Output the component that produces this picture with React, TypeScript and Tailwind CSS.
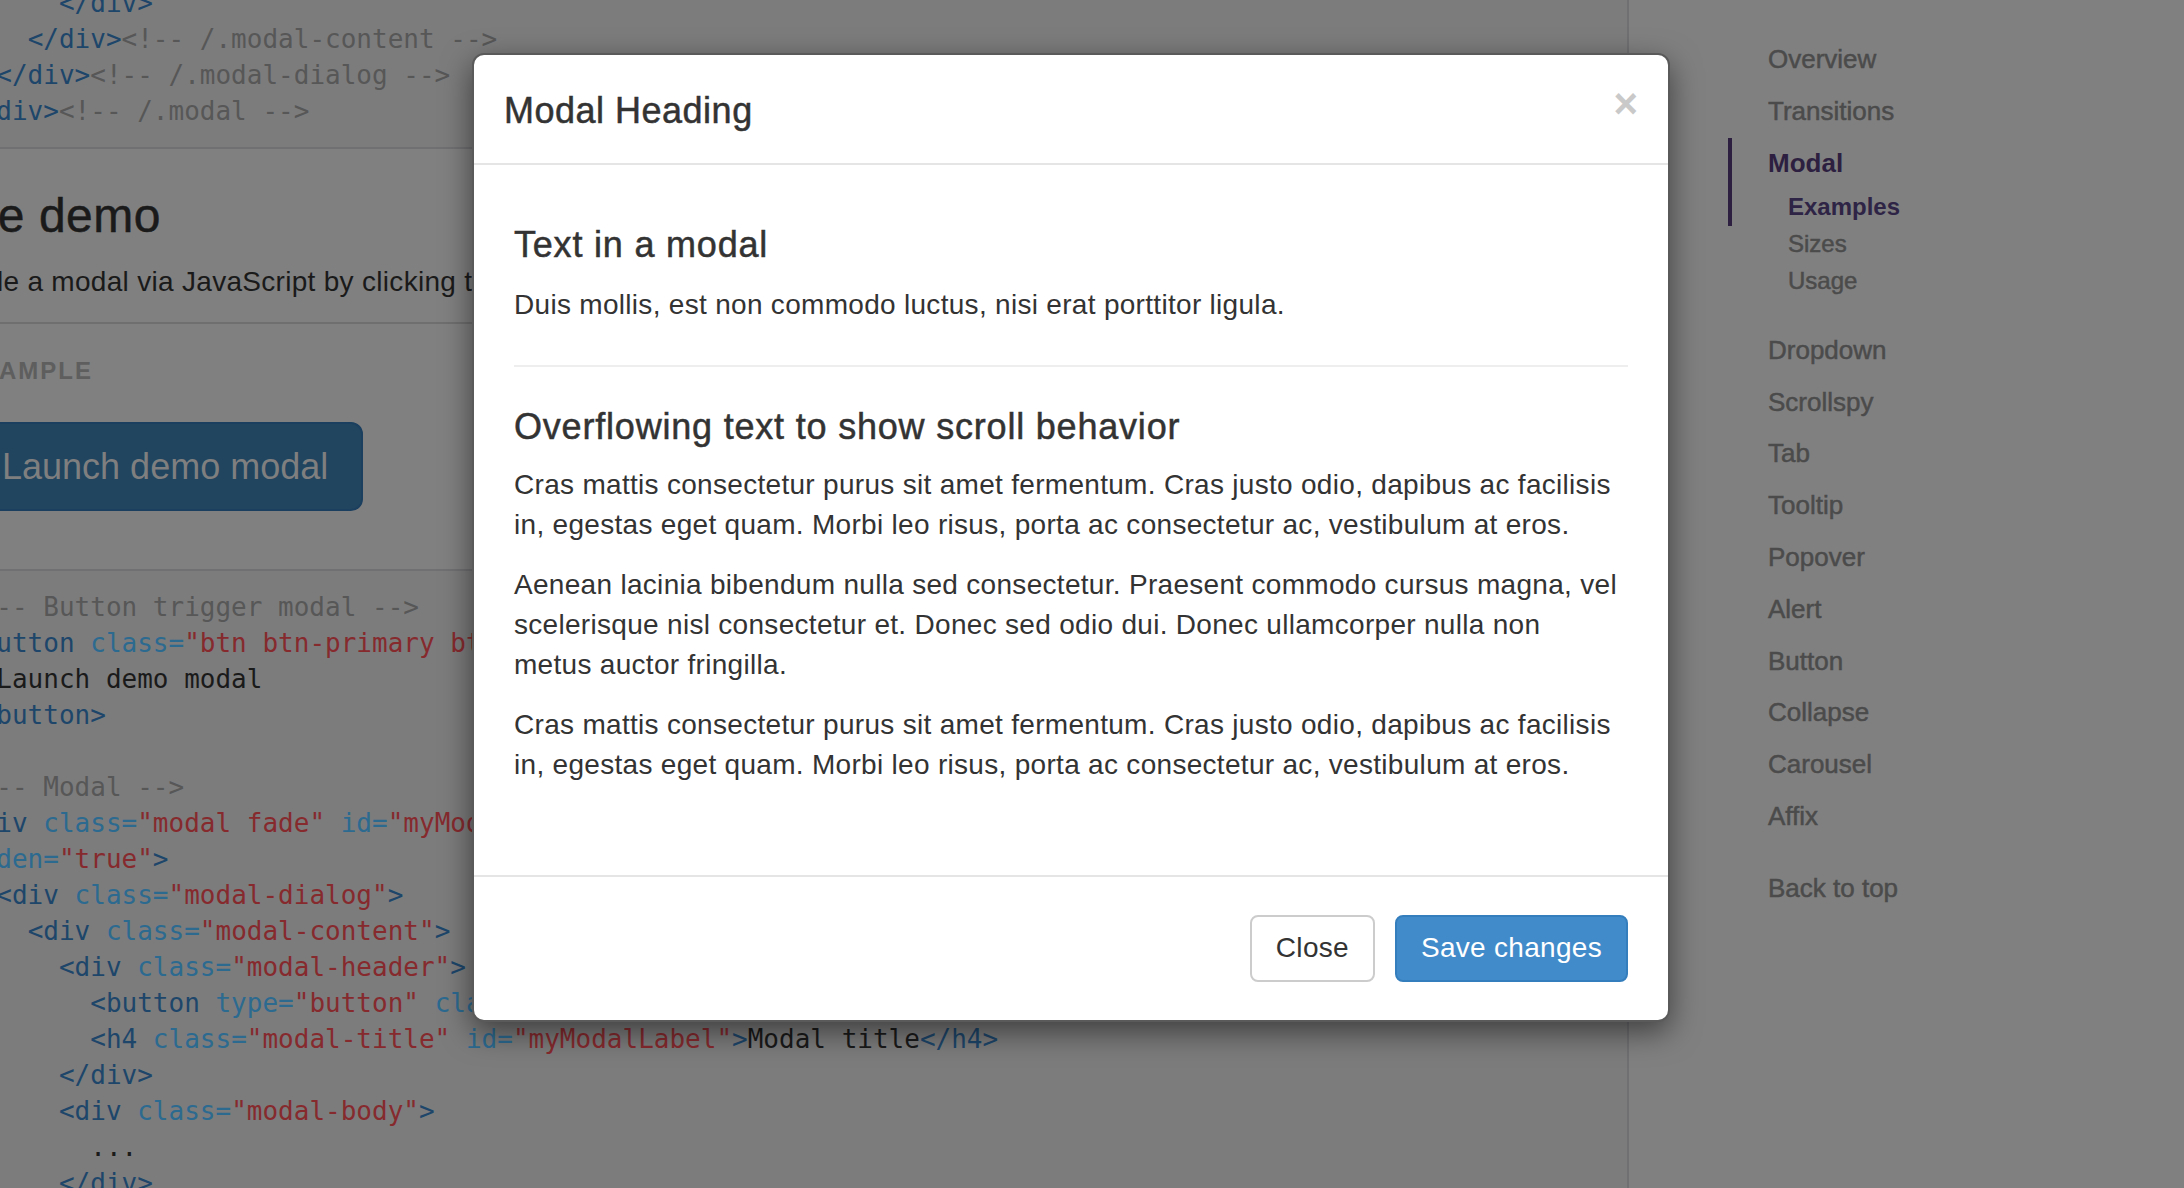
const tone = {
  tag: "text-[#1d466a]",
  attr: "text-[#2c6a90]",
  str: "text-[#862a2e]",
  com: "text-[#575757]",
  txt: "text-[#1a1a1a]",
};

type Tok = [keyof typeof tone, string];

const topLines: Tok[][] = [
  [["txt", "      "], ["tag", "</div>"]],
  [["txt", "    "], ["tag", "</div>"], ["com", "<!-- /.modal-content -->"]],
  [["txt", "  "], ["tag", "</div>"], ["com", "<!-- /.modal-dialog -->"]],
  [["tag", "</div>"], ["com", "<!-- /.modal -->"]],
];

const bottomLines: Tok[][] = [
  [["com", "<!-- Button trigger modal -->"]],
  [
    ["tag", "<button"], ["txt", " "], ["attr", "class="], ["str", '"btn btn-primary btn-lg"'],
    ["txt", " "], ["attr", "data-toggle="], ["str", '"modal"'], ["txt", " "],
    ["attr", "data-target="], ["str", '"#myModal"'], ["tag", ">"],
  ],
  [["txt", "  Launch demo modal"]],
  [["tag", "</button>"]],
  [],
  [["com", "<!-- Modal -->"]],
  [
    ["tag", "<div"], ["txt", " "], ["attr", "class="], ["str", '"modal fade"'], ["txt", " "],
    ["attr", "id="], ["str", '"myModal"'], ["txt", " "], ["attr", "tabindex="], ["str", '"-1"'],
    ["txt", " "], ["attr", "role="], ["str", '"dialog"'], ["txt", " "],
    ["attr", "aria-labelledby="], ["str", '"myModalLabel"'], ["txt", " "], ["attr", "aria-h"],
  ],
  [["attr", "idden="], ["str", '"true"'], ["tag", ">"]],
  [["txt", "  "], ["tag", "<div"], ["txt", " "], ["attr", "class="], ["str", '"modal-dialog"'], ["tag", ">"]],
  [["txt", "    "], ["tag", "<div"], ["txt", " "], ["attr", "class="], ["str", '"modal-content"'], ["tag", ">"]],
  [["txt", "      "], ["tag", "<div"], ["txt", " "], ["attr", "class="], ["str", '"modal-header"'], ["tag", ">"]],
  [
    ["txt", "        "], ["tag", "<button"], ["txt", " "], ["attr", "type="], ["str", '"button"'],
    ["txt", " "], ["attr", "class="], ["str", '"close"'], ["txt", " "], ["attr", "data-dismiss="],
    ["str", '"modal"'], ["txt", " "], ["attr", "aria-hidden="], ["str", '"true"'], ["tag", ">"],
    ["txt", "&times;"], ["tag", "</button>"],
  ],
  [
    ["txt", "        "], ["tag", "<h4"], ["txt", " "], ["attr", "class="], ["str", '"modal-title"'],
    ["txt", " "], ["attr", "id="], ["str", '"myModalLabel"'], ["tag", ">"], ["txt", "Modal title"],
    ["tag", "</h4>"],
  ],
  [["txt", "      "], ["tag", "</div>"]],
  [["txt", "      "], ["tag", "<div"], ["txt", " "], ["attr", "class="], ["str", '"modal-body"'], ["tag", ">"]],
  [["txt", "        ..."]],
  [["txt", "      "], ["tag", "</div>"]],
  [["txt", "      "], ["tag", "<div"], ["txt", " "], ["attr", "class="], ["str", '"modal-footer"'], ["tag", ">"]],
];

const CodeBlock = ({ lines }: { lines: Tok[][] }) => (
  <pre className="overflow-hidden border-2 border-[#707073] bg-[#7c7c7d] px-[28px] py-[18px] font-['DejaVu_Sans_Mono',monospace] text-[26px] leading-[36px]">
    {lines.map((line, i) => (
      <div key={i} className="h-[36px] whitespace-pre">
        {line.length === 0
          ? " "
          : line.map(([kind, text], j) => (
              <span key={j} className={tone[kind]}>
                {text}
              </span>
            ))}
      </div>
    ))}
  </pre>
);

const laterNav = [
  "Dropdown",
  "Scrollspy",
  "Tab",
  "Tooltip",
  "Popover",
  "Alert",
  "Button",
  "Collapse",
  "Carousel",
  "Affix",
];

// medium weight (Helvetica Neue 500) faked with a thin stroke
const medium = "[-webkit-text-stroke:0.5px_currentcolor]";
const navLink = `block py-[8px] pl-[40px] text-[26px] leading-[35.8px] text-[#4b4b4b] ${medium}`;

const Sidebar = () => (
  <aside className="pl-[99px] pt-[34px]">
    <ul>
      {["Overview", "Transitions"].map((item) => (
        <li key={item}>
          <a className={navLink}>{item}</a>
        </li>
      ))}
      <li>
        <a className="block border-l-4 border-[#2c1f40] py-[8px] pl-[36px] text-[26px] font-bold leading-[35.8px] text-[#2c1f40]">
          Modal
        </a>
        <ul className="mb-[25px]">
          <li>
            <a className="block border-l-4 border-[#2c1f40] py-[2px] pl-[56px] text-[24px] font-bold leading-[32.8px] text-[#2e2445]">
              Examples
            </a>
          </li>
          {["Sizes", "Usage"].map((item) => (
            <li key={item}>
              <a className={`block py-[2px] pl-[60px] text-[24px] leading-[32.8px] text-[#4b4b4b] ${medium}`}>
                {item}
              </a>
            </li>
          ))}
        </ul>
      </li>
      {laterNav.map((item) => (
        <li key={item}>
          <a className={navLink}>{item}</a>
        </li>
      ))}
    </ul>
    <a className={`${navLink} mt-[20px]`}>Back to top</a>
  </aside>
);

const Modal = () => (
  <div className="absolute left-[472px] top-[53px] w-[1198px] rounded-[12px] border-2 border-[#5a5a5a] bg-white text-[#333] shadow-[0_10px_30px_rgba(0,0,0,0.5)]">
    <div className="flex items-start justify-between border-b-2 border-[#e5e5e5] px-[30px] pb-[27px] pt-[30px]">
      <h4 className={`text-[36px] leading-[51.4px] tracking-[0.5px] ${medium}`}>Modal Heading</h4>
      <button className="-mt-[2px] text-[42px] font-bold leading-none text-[#c9c9c9]">×</button>
    </div>

    <div className="px-[40px] py-[40px] text-[28px] leading-[40px] tracking-[0.3px]">
      <h4 className={`mb-[20px] mt-[20px] text-[36px] leading-[39.6px] tracking-[0.8px] ${medium}`}>
        Text in a modal
      </h4>
      <p className="mb-[20px]">Duis mollis, est non commodo luctus, nisi erat porttitor ligula.</p>
      <hr className="mb-[40px] mt-[40px] border-t-2 border-[#eeeeee]" />
      <h4 className={`mb-[18px] text-[36px] leading-[39.6px] tracking-[0.8px] ${medium}`}>
        Overflowing text to show scroll behavior
      </h4>
      <p className="mb-[20px]">
        Cras mattis consectetur purus sit amet fermentum. Cras justo odio, dapibus ac facilisis
        <br />
        in, egestas eget quam. Morbi leo risus, porta ac consectetur ac, vestibulum at eros.
      </p>
      <p className="mb-[20px]">
        Aenean lacinia bibendum nulla sed consectetur. Praesent commodo cursus magna, vel
        <br />
        scelerisque nisl consectetur et. Donec sed odio dui. Donec ullamcorper nulla non
        <br />
        metus auctor fringilla.
      </p>
      <p className="mb-[20px]">
        Cras mattis consectetur purus sit amet fermentum. Cras justo odio, dapibus ac facilisis
        <br />
        in, egestas eget quam. Morbi leo risus, porta ac consectetur ac, vestibulum at eros.
      </p>
    </div>

    <div className="mt-[30px] flex justify-end gap-[20px] border-t-2 border-[#e5e5e5] pb-[38px] pr-[40px] pt-[38px]">
      <button className="h-[67px] rounded-[8px] border-2 border-[#cccccc] bg-white px-[24px] text-[28px] tracking-[0.3px] text-[#333]">
        Close
      </button>
      <button className="h-[67px] rounded-[8px] border-2 border-[#357ebd] bg-[#428bca] px-[24px] text-[28px] tracking-[0.3px] text-white">
        Save changes
      </button>
    </div>
  </div>
);

export default function App() {
  return (
    <div className="relative h-[1188px] w-[2184px] overflow-hidden bg-[#808080] font-['Liberation_Sans',Arial,sans-serif]">
      <div className="flex">
        <main className="-mt-[35px] ml-[-65px] w-[1694px] shrink-0">
          <CodeBlock lines={topLines} />

          <h3 className={`mt-[40px] text-[48px] leading-[53px] tracking-[0.5px] text-[#1a1a1a] ${medium}`}>
            Live demo
          </h3>
          <p className="mt-[20px] whitespace-nowrap text-[28px] leading-[40px] tracking-[0.3px] text-[#1a1a1a]">
            Toggle a modal via JavaScript by clicking the button below. It will slide down and fade in from the top of the page.
          </p>

          <div className="relative mt-[20px] rounded-t-[8px] border-2 border-b-0 border-[#6f6f6f] px-[30px] pb-[58px] pt-[98px]">
            <span className="absolute left-[26px] top-[30px] text-[24px] font-bold uppercase leading-[34px] tracking-[2px] text-[#5e5e5e]">
              Example
            </span>
            <button className="flex h-[89px] items-center rounded-[12px] border-2 border-[#1b3f5e] bg-[#21455f] px-[33px] text-[36px] text-[#7f7f7f]">
              Launch demo modal
            </button>
          </div>

          <CodeBlock lines={bottomLines} />
        </main>
        <Sidebar />
      </div>

      <Modal />
    </div>
  );
}
